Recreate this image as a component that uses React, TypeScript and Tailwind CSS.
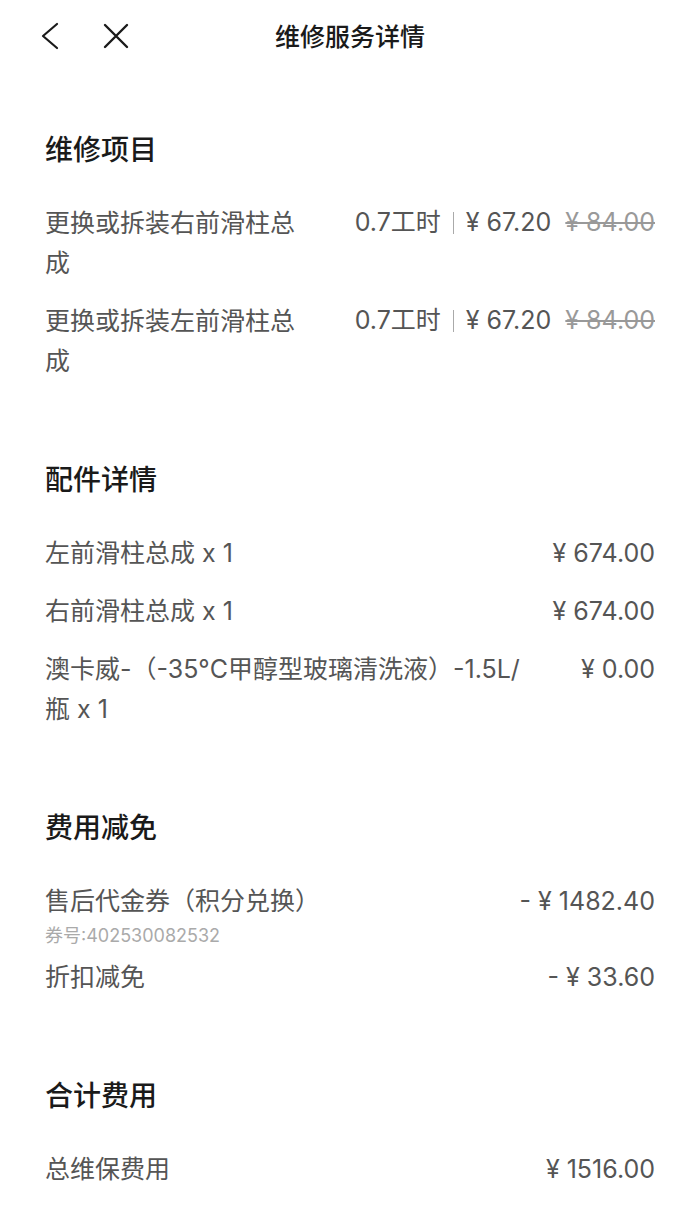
const font = "font-['Inter','Noto_Sans_CJK_SC',sans-serif]";

const SectionTitle = ({ title }: { title: string }) => (
  <h2 className="text-[28px] leading-[40px] font-medium text-[#1a1a1a] mb-[33px]">{title}</h2>
);

const LaborRow = ({ name }: { name: string }) => (
  <div className="flex justify-between">
    <p className="w-[256px] text-[25px] leading-[40px] text-[#555]">{name}</p>
    <div className="flex items-center h-[40px] text-[25px] text-[#555] whitespace-nowrap">
      <span>0.7工时</span>
      <span className="inline-block w-px h-[22px] bg-[#aaa] mx-[12px]" />
      <span>¥ 67.20</span>
      <span className="ml-[14px] text-[#999] line-through decoration-[#999]">¥ 84.00</span>
    </div>
  </div>
);

const PriceRow = ({ name, price }: { name: string; price: string }) => (
  <div className="flex justify-between gap-[40px]">
    <p className="text-[25px] leading-[40px] text-[#555]">{name}</p>
    <p className="text-[25px] leading-[40px] text-[#555] whitespace-nowrap">{price}</p>
  </div>
);

export default function App() {
  return (
    <div className={`${font} bg-white w-[700px] min-h-[1210px]`}>
      {/* header */}
      <header className="relative h-[75px] flex items-center justify-center">
        <div className="absolute left-[40px] top-[22px] flex items-center gap-[42px]">
          <svg width="20" height="28" viewBox="0 0 20 28" fill="none" stroke="#1a1a1a" strokeWidth="2.2" strokeLinecap="round" strokeLinejoin="round">
            <path d="M17 2 L3 14 L17 26" />
          </svg>
          <svg width="28" height="28" viewBox="0 0 28 28" fill="none" stroke="#1a1a1a" strokeWidth="2.4" strokeLinecap="round">
            <path d="M3 3 L25 25 M25 3 L3 25" />
          </svg>
        </div>
        <h1 className="text-[25px] font-medium text-[#1a1a1a]">维修服务详情</h1>
      </header>

      <main className="px-[45px] pt-[55px] flex flex-col gap-[79px]">
        <section>
          <SectionTitle title="维修项目" />
          <div className="flex flex-col gap-[18px]">
            <LaborRow name="更换或拆装右前滑柱总成" />
            <LaborRow name="更换或拆装左前滑柱总成" />
          </div>
        </section>

        <section>
          <SectionTitle title="配件详情" />
          <div className="flex flex-col gap-[18px]">
            <PriceRow name="左前滑柱总成 x 1" price="¥ 674.00" />
            <PriceRow name="右前滑柱总成 x 1" price="¥ 674.00" />
            <PriceRow name="澳卡威-（-35°C甲醇型玻璃清洗液）-1.5L/瓶 x 1" price="¥ 0.00" />
          </div>
        </section>

        <section>
          <SectionTitle title="费用减免" />
          <div className="flex flex-col gap-[9px]">
            <div>
              <PriceRow name="售后代金券（积分兑换）" price="- ¥ 1482.40" />
              <p className="mt-[3px] text-[18px] leading-[24px] text-[#aaa]">券号:402530082532</p>
            </div>
            <PriceRow name="折扣减免" price="- ¥ 33.60" />
          </div>
        </section>

        <section>
          <SectionTitle title="合计费用" />
          <PriceRow name="总维保费用" price="¥ 1516.00" />
        </section>
      </main>
    </div>
  );
}
